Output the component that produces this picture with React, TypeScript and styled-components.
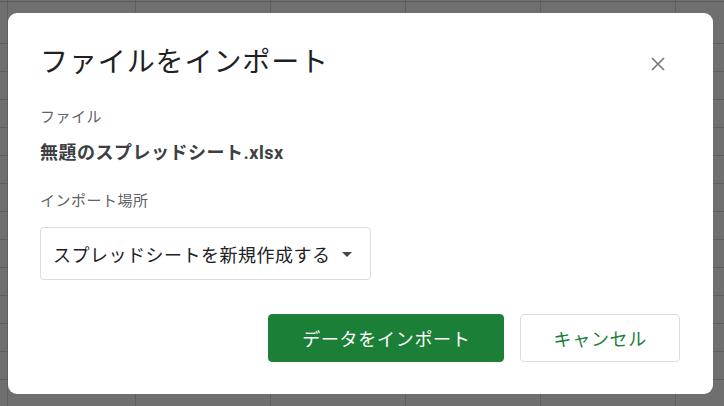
import React from "react";
import styled, { createGlobalStyle } from "styled-components";

const GlobalStyle = createGlobalStyle`
  html, body {
    margin: 0;
    padding: 0;
  }
  body {
    font-family: Roboto, "Noto Sans CJK JP", sans-serif;
  }
`;

// dimmed spreadsheet grid behind the modal
const Backdrop = styled.div`
  width: 724px;
  height: 406px;
  box-sizing: border-box;
  padding: 13px 0 0 8px;
  background-color: #6f6f6f;
  background-image:
    linear-gradient(to right, transparent 7px, #5f5f5f 7px, #5f5f5f 8px, transparent 8px),
    repeating-linear-gradient(to right, transparent 0, transparent 134px, #5f5f5f 134px, #5f5f5f 135px),
    repeating-linear-gradient(to bottom, transparent 0, transparent 27px, #5f5f5f 27px, #5f5f5f 28px);
  background-position: 0 0, 1px 0, 0 16px;
  overflow: hidden;
`;

const Dialog = styled.div`
  width: 705px;
  height: 381px;
  box-sizing: border-box;
  padding: 32px 33px 32px 32px;
  background: #fff;
  border-radius: 9px;
  display: flex;
  flex-direction: column;
`;

const Header = styled.div`
  display: flex;
  align-items: center;
  justify-content: space-between;
  height: 36px;
`;

const Title = styled.h1`
  margin: 0;
  font-size: 28px;
  line-height: 36px;
  font-weight: 400;
  letter-spacing: 0.9px;
  color: #202124;
`;

const CloseButton = styled.button`
  width: 44px;
  height: 40px;
  border: none;
  background: transparent;
  padding: 0;
  display: flex;
  align-items: center;
  justify-content: center;
  margin-top: 2px;
  cursor: pointer;
`;

const Label = styled.div<{ $top: number }>`
  margin-top: ${(p) => p.$top}px;
  font-size: 15px;
  line-height: 20px;
  letter-spacing: 0.5px;
  color: #5f6368;
`;

const FileName = styled.div`
  margin-top: 14px;
  font-size: 18px;
  line-height: 24px;
  font-weight: 700;
  letter-spacing: 0.5px;
  color: #3c4043;
`;

const Select = styled.div`
  margin-top: 16px;
  width: 331px;
  height: 53px;
  box-sizing: border-box;
  border: 1px solid #dadce0;
  border-radius: 4px;
  display: flex;
  align-items: center;
  padding: 0 18px 0 12px;
  gap: 11px;
  font-size: 18px;
  letter-spacing: 0.5px;
  color: #202124;
`;

const Arrow = styled.span`
  width: 0;
  height: 0;
  border-left: 5px solid transparent;
  border-right: 5px solid transparent;
  border-top: 5px solid #444746;
  margin-top: 2px;
`;

const Footer = styled.div`
  margin-top: auto;
  display: flex;
  justify-content: flex-end;
  gap: 16px;
`;

const Button = styled.button<{ $primary?: boolean }>`
  height: 48px;
  box-sizing: border-box;
  padding: 0 32px 0 33px;
  border-radius: 4px;
  font-family: Roboto, "Noto Sans CJK JP", sans-serif;
  font-size: 18px;
  letter-spacing: 0.7px;
  cursor: pointer;
  border: 1px solid ${(p) => (p.$primary ? "#1c7f38" : "#dadce0")};
  background: ${(p) => (p.$primary ? "#1c7f38" : "#fff")};
  color: ${(p) => (p.$primary ? "#fff" : "#1c7f38")};
`;

export default function App() {
  return (
    <>
      <GlobalStyle />
      <Backdrop>
        <Dialog>
          <Header>
            <Title>ファイルをインポート</Title>
            <CloseButton aria-label="閉じる">
              <svg width="14" height="14" viewBox="0 0 14 14">
                <path d="M1 1L13 13M13 1L1 13" stroke="#757575" strokeWidth="1.6" />
              </svg>
            </CloseButton>
          </Header>
          <Label $top={26}>ファイル</Label>
          <FileName>無題のスプレッドシート.xlsx</FileName>
          <Label $top={26}>インポート場所</Label>
          <Select>
            スプレッドシートを新規作成する
            <Arrow />
          </Select>
          <Footer>
            <Button $primary>データをインポート</Button>
            <Button>キャンセル</Button>
          </Footer>
        </Dialog>
      </Backdrop>
    </>
  );
}
